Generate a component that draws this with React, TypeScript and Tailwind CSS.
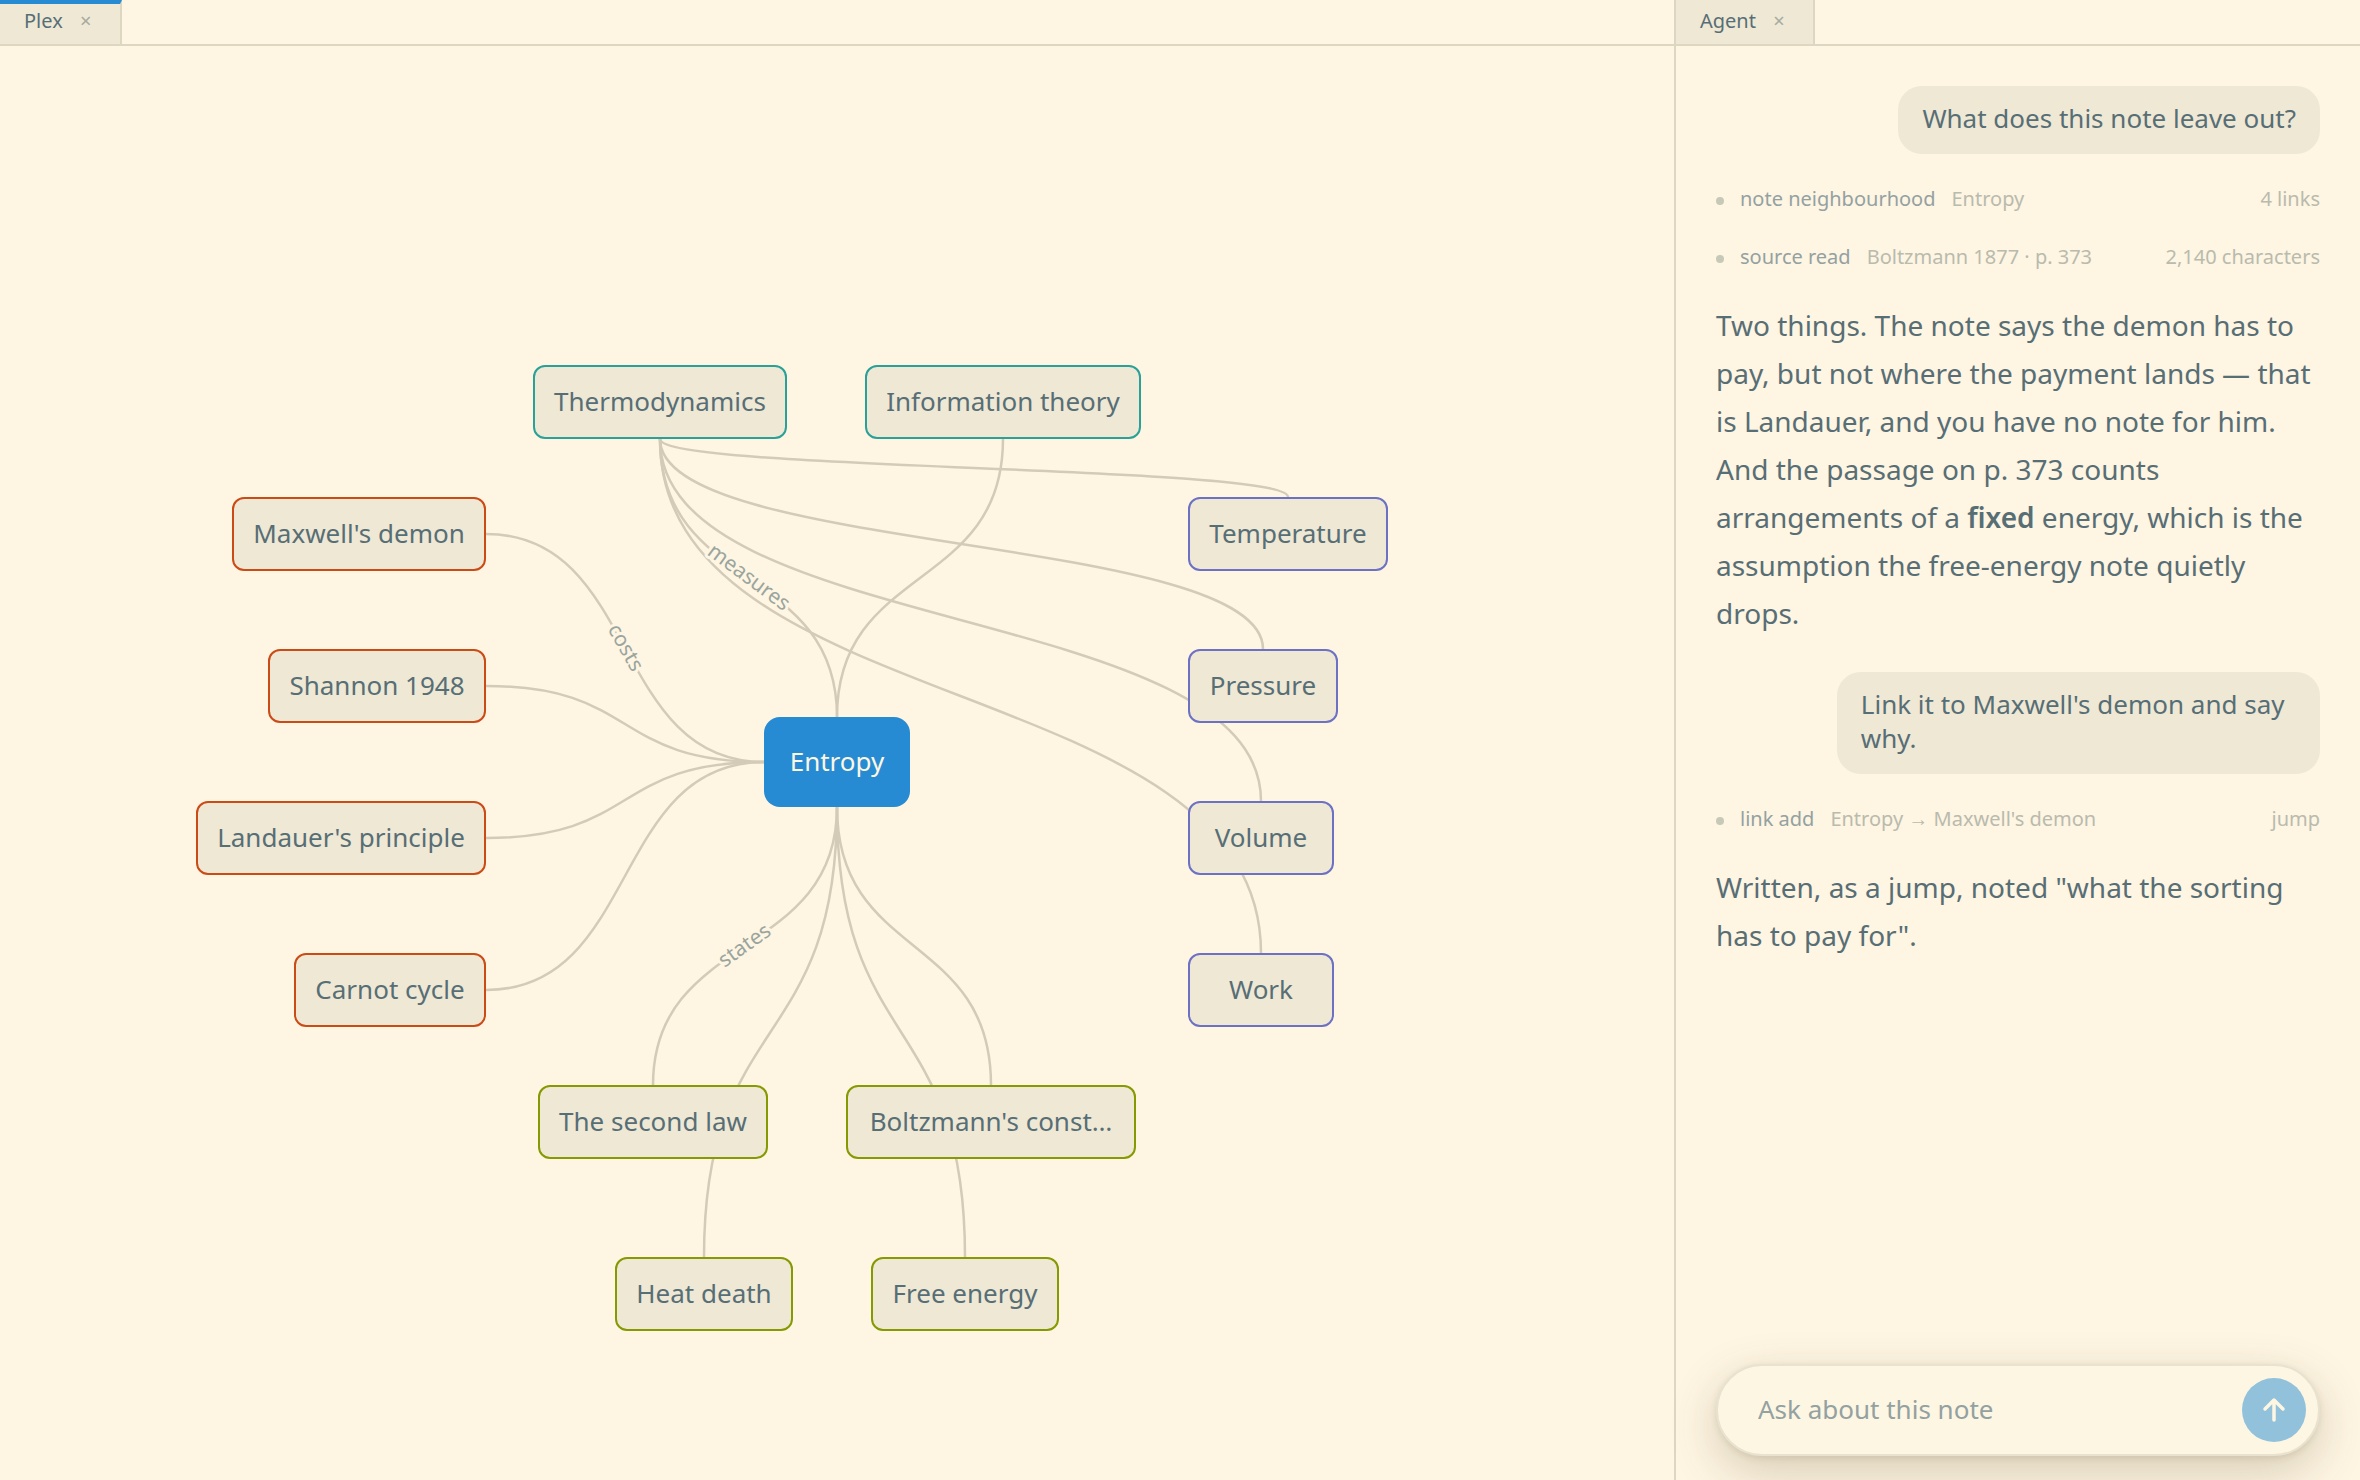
import React, { useState } from 'react';

type Kind = 'parent' | 'jump' | 'sibling' | 'child' | 'focus';

interface PlexNode {
  id: string;
  title: string;
  kind: Kind;
  // centre of the node, measured from the middle of the pane
  x: number;
  y: number;
  w: number;
}

interface PlexEdge {
  from: string;
  to: string;
  label?: string;
}

type Point = [number, number];

const NODE_H = 74;
const FOCUS_H = 90;
const BEND = 0.55;

const nodes: PlexNode[] = [
  { id: 'thermo', title: 'Thermodynamics', kind: 'parent', x: -177, y: -360, w: 254 },
  { id: 'info', title: 'Information theory', kind: 'parent', x: 166, y: -360, w: 276 },
  { id: 'maxwell', title: "Maxwell's demon", kind: 'jump', x: -478, y: -228, w: 254 },
  { id: 'shannon', title: 'Shannon 1948', kind: 'jump', x: -460, y: -76, w: 218 },
  { id: 'landauer', title: "Landauer's principle", kind: 'jump', x: -496, y: 76, w: 290 },
  { id: 'carnot', title: 'Carnot cycle', kind: 'jump', x: -447, y: 228, w: 192 },
  { id: 'temperature', title: 'Temperature', kind: 'sibling', x: 451, y: -228, w: 200 },
  { id: 'pressure', title: 'Pressure', kind: 'sibling', x: 426, y: -76, w: 150 },
  { id: 'volume', title: 'Volume', kind: 'sibling', x: 424, y: 76, w: 146 },
  { id: 'work', title: 'Work', kind: 'sibling', x: 424, y: 228, w: 146 },
  { id: 'second', title: 'The second law', kind: 'child', x: -184, y: 360, w: 230 },
  { id: 'boltzmann', title: "Boltzmann's const…", kind: 'child', x: 154, y: 360, w: 290 },
  { id: 'heat', title: 'Heat death', kind: 'child', x: -133, y: 532, w: 178 },
  { id: 'free', title: 'Free energy', kind: 'child', x: 128, y: 532, w: 188 },
  { id: 'entropy', title: 'Entropy', kind: 'focus', x: 0, y: 0, w: 146 },
];

const edges: PlexEdge[] = [
  { from: 'thermo', to: 'temperature' },
  { from: 'thermo', to: 'pressure' },
  { from: 'thermo', to: 'volume' },
  { from: 'thermo', to: 'work' },
  { from: 'info', to: 'entropy' },
  { from: 'shannon', to: 'entropy' },
  { from: 'landauer', to: 'entropy' },
  { from: 'carnot', to: 'entropy' },
  { from: 'entropy', to: 'heat' },
  { from: 'entropy', to: 'free' },
  { from: 'entropy', to: 'boltzmann' },
  { from: 'thermo', to: 'entropy', label: 'measures' },
  { from: 'maxwell', to: 'entropy', label: 'costs' },
  { from: 'entropy', to: 'second', label: 'states' },
];

const kindStyles: Record<Kind, string> = {
  parent: 'h-[74px] rounded-xl border-2 border-[#2aa198] bg-[#eee8d5] text-[#586e75]',
  jump: 'h-[74px] rounded-xl border-2 border-[#cb4b16] bg-[#eee8d5] text-[#586e75]',
  sibling: 'h-[74px] rounded-xl border-2 border-[#6c71c4] bg-[#eee8d5] text-[#586e75]',
  child: 'h-[74px] rounded-xl border-2 border-[#859900] bg-[#eee8d5] text-[#586e75]',
  focus: 'h-[90px] rounded-2xl bg-[#268bd2] text-[#fdf6e3]',
};

const byId = (id: string) => nodes.find(n => n.id === id)!;
const heightOf = (n: PlexNode) => (n.kind === 'focus' ? FOCUS_H : NODE_H);

// Jumps leave sideways, everything else runs top to bottom
const curveOf = (edge: PlexEdge): Point[] => {
  const a = byId(edge.from);
  const b = byId(edge.to);
  if (a.kind === 'jump') {
    const x1 = a.x + a.w / 2;
    const x2 = b.x - b.w / 2;
    const reach = (x2 - x1) * BEND;
    return [[x1, a.y], [x1 + reach, a.y], [x2 - reach, b.y], [x2, b.y]];
  }
  const y1 = a.y + heightOf(a) / 2;
  const y2 = b.y - heightOf(b) / 2;
  const reach = (y2 - y1) * BEND;
  return [[a.x, y1], [a.x, y1 + reach], [b.x, y2 - reach], [b.x, y2]];
};

const edgePath = (edge: PlexEdge) => {
  const [p0, p1, p2, p3] = curveOf(edge);
  return `M${p0} C${p1} ${p2} ${p3}`;
};

const pointAt = (curve: Point[], t: number): Point => {
  const u = 1 - t;
  const k = [u * u * u, 3 * u * u * t, 3 * u * t * t, t * t * t];
  return [0, 1].map(axis => curve.reduce((sum, p, i) => sum + p[axis] * k[i], 0)) as Point;
};

// Labels sit on the middle of the curve and follow its slope, never upside down
const labelTransform = (edge: PlexEdge) => {
  const curve = curveOf(edge);
  const [x, y] = pointAt(curve, 0.5);
  const [[ax, ay], [bx, by]] = [pointAt(curve, 0.38), pointAt(curve, 0.62)].sort((a, b) => a[0] - b[0]);
  const angle = (Math.atan2(by - ay, bx - ax) * 180) / Math.PI;
  return `translate(${x} ${y}) rotate(${angle})`;
};

const Tab: React.FC<{ title: string; active?: boolean }> = ({ title, active }) => (
  <div
    className={
      active
        ? 'flex items-center gap-[15px] border-t-4 border-r-2 border-t-[#268bd2] border-r-[#ddd6c1] bg-[#eee8d5] pr-[26px] pb-[6px] pl-6'
        : 'flex items-center gap-[15px] border-r-2 border-r-[#ddd6c1] bg-[#eee8d5] pr-[26px] pb-[2px] pl-6'
    }
  >
    <span className="text-xl leading-7 text-[#586e75]">{title}</span>
    <button aria-label={`Close ${title}`} className="w-4 text-center text-xl leading-7 text-[#a6aa9f]">×</button>
  </div>
);

const Plex: React.FC = () => (
  <div className="grid min-h-0 flex-1 place-items-center overflow-hidden pb-[2px]">
    <div className="relative size-0">
      <svg className="absolute top-0 left-0 size-px overflow-visible" fill="none">
        {edges.map(edge => (
          <path key={`${edge.from}-${edge.to}`} d={edgePath(edge)} stroke="#d3cbb7" strokeWidth={2.5} />
        ))}
        {edges.filter(edge => edge.label).map(edge => (
          <text
            key={edge.label}
            className="fill-[#9aa59d] stroke-[#fef5e3] text-[21px]"
            transform={labelTransform(edge)}
            strokeWidth={6}
            strokeLinejoin="round"
            paintOrder="stroke"
            textAnchor="middle"
            dy={6}
          >
            {edge.label}
          </text>
        ))}
      </svg>
      {nodes.map(node => (
        <button
          key={node.id}
          className={`absolute -translate-x-1/2 -translate-y-1/2 pb-[2px] text-center text-[26px] leading-9 whitespace-nowrap ${kindStyles[node.kind]}`}
          style={{ left: node.x, top: node.y, width: node.w }}
        >
          {node.title}
        </button>
      ))}
    </div>
  </div>
);

const Ask: React.FC<{ children: React.ReactNode }> = ({ children }) => (
  <div className="mt-[5px] mb-px max-w-4/5 self-end rounded-3xl bg-[#eee8d5] px-6 pt-[15px] pb-[19px] text-[26px] leading-[34px]">
    {children}
  </div>
);

const ToolCall: React.FC<{ name: string; detail: string; result: string }> = ({ name, detail, result }) => (
  <div className="flex items-center text-xl leading-7 text-[#b9bbad]">
    <span className="mt-1 mr-4 size-2 rounded-full bg-[#c6c9b8]" />
    <span className="mr-4 text-[#93a1a1]">{name}</span>
    <span>{detail}</span>
    <span className="ml-auto">{result}</span>
  </div>
);

const Reply: React.FC<{ children: React.ReactNode }> = ({ children }) => (
  <p className="text-[28px] leading-[48px]">{children}</p>
);

const Composer: React.FC = () => {
  const [draft, setDraft] = useState('');

  return (
    <form
      className="mx-10 mb-6 flex h-[92px] items-center rounded-full border-2 border-[#e9e2cf] bg-[#fdf6e3] pr-3 pl-10 shadow-[0_16px_48px_rgba(85,75,30,0.23),0_2px_6px_rgba(85,75,30,0.12)]"
      onSubmit={e => {
        e.preventDefault();
        setDraft('');
      }}
    >
      <input
        aria-label="Ask about this note"
        className="min-w-0 flex-1 bg-transparent pb-[2px] text-[26px] leading-9 outline-none placeholder:text-[#93a1a1]"
        placeholder="Ask about this note"
        value={draft}
        onChange={e => setDraft(e.target.value)}
      />
      <button aria-label="Send" className="grid size-16 place-items-center rounded-full bg-[#92c1dc]">
        <svg className="size-8" viewBox="0 0 32 32" fill="none" stroke="#fdf6e3" strokeWidth="3.5" strokeLinecap="round" strokeLinejoin="round">
          <path d="M16 26V6M7 15l9-9 9 9" />
        </svg>
      </button>
    </form>
  );
};

const App: React.FC = () => (
  <div className="flex h-screen bg-[#fef5e3] font-['Noto_Sans',sans-serif] text-[#586e75]">
    <main className="flex min-w-0 flex-1 flex-col">
      <header className="flex h-[46px] shrink-0 border-b-2 border-[#ddd6c1]">
        <Tab title="Plex" active />
      </header>
      <Plex />
    </main>

    <aside className="flex w-[686px] shrink-0 flex-col border-l-2 border-[#ddd6c1]">
      <header className="flex h-[46px] shrink-0 border-b-2 border-[#ddd6c1]">
        <Tab title="Agent" />
      </header>
      <div className="flex min-h-0 flex-1 flex-col gap-[30px] px-10 pt-[35px]">
        <Ask>What does this note leave out?</Ask>
        <ToolCall name="note neighbourhood" detail="Entropy" result="4 links" />
        <ToolCall name="source read" detail="Boltzmann 1877 · p. 373" result="2,140 characters" />
        <Reply>
          Two things. The note says the demon has to pay, but not where the payment lands — that is
          Landauer, and you have no note for him. And the passage on p. 373 counts arrangements of
          a <strong className="font-semibold">fixed</strong> energy, which is the assumption the
          free-energy note quietly drops.
        </Reply>
        <Ask>Link it to Maxwell's demon and say why.</Ask>
        <ToolCall name="link add" detail="Entropy → Maxwell's demon" result="jump" />
        <Reply>Written, as a jump, noted "what the sorting has to pay for".</Reply>
      </div>
      <Composer />
    </aside>
  </div>
);

export default App;
